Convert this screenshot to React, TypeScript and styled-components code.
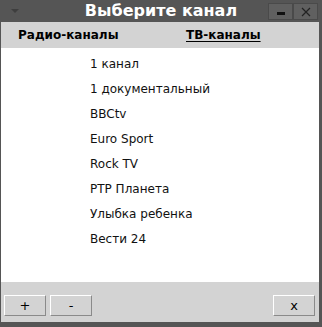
import styled, { createGlobalStyle } from "styled-components"

const GlobalStyle = createGlobalStyle`
    html, body {
        margin: 0;
        padding: 0;
        background: #555555;
    }
    body {
        font-family: "DejaVu Sans", "Liberation Sans", sans-serif;
    }
`

const channels = [
    "1 канал",
    "1 документальный",
    "BBCtv",
    "Euro Sport",
    "Rock TV",
    "РТР Планета",
    "Улыбка ребенка",
    "Вести 24",
]

export default function App() {
    return (
        <Window>
            <GlobalStyle />
            <TitleBar>
                <MenuArrow />
                <Title>Выберите канал</Title>
                <TitleButtons>
                    <TitleButton>
                        <svg width="10" height="10" viewBox="0 0 10 10">
                            <rect x="1" y="5" width="8" height="3" fill="#111" />
                        </svg>
                    </TitleButton>
                    <TitleButton>
                        <svg width="10" height="10" viewBox="0 0 10 10">
                            <path d="M1 1 L9 9 M9 1 L1 9" stroke="#222" strokeWidth="1.2" />
                        </svg>
                    </TitleButton>
                </TitleButtons>
            </TitleBar>
            <Body>
                <Tabs>
                    <Tab>Радио-каналы</Tab>
                    <Tab $active>ТВ-каналы</Tab>
                </Tabs>
                <List>
                    {channels.map((name) => (
                        <Item key={name}>{name}</Item>
                    ))}
                </List>
                <Footer>
                    <ButtonGroup>
                        <Button>+</Button>
                        <Button>-</Button>
                    </ButtonGroup>
                    <Button>x</Button>
                </Footer>
            </Body>
        </Window>
    )
}

const Window = styled.div`
    width: 322px;
    height: 327px;
    background: #555555;
    display: flex;
    flex-direction: column;
    box-sizing: border-box;
    padding: 0 3px 5px 1px;
`
const TitleBar = styled.div`
    height: 22px;
    display: flex;
    align-items: center;
    position: relative;
    margin-right: -3px;
    margin-left: -1px;
`
const MenuArrow = styled.div`
    position: absolute;
    left: 11px;
    top: 9px;
    width: 0;
    height: 0;
    border-left: 4px solid transparent;
    border-right: 4px solid transparent;
    border-top: 4px solid #3e3e3e;
`
const Title = styled.div`
    flex: 1;
    text-align: center;
    color: #ffffff;
    font-weight: bold;
    font-size: 16px;
    line-height: 22px;
`
const TitleButtons = styled.div`
    position: absolute;
    left: 268px;
    top: 3px;
    display: flex;
`
const TitleButton = styled.div`
    width: 25px;
    height: 17px;
    box-sizing: border-box;
    border: 1px solid #4a4a4a;
    background: #606060;
    display: flex;
    align-items: center;
    justify-content: center;
`
const Body = styled.div`
    flex: 1;
    background: #d3d3d3;
    display: flex;
    flex-direction: column;
`
const Tabs = styled.div`
    height: 26px;
    display: flex;
    align-items: center;
    padding-left: 17px;
`
const Tab = styled.div<{ $active?: boolean }>`
    flex: none;
    font-weight: bold;
    font-size: 12px;
    color: #000;
    width: ${(p) => (p.$active ? "auto" : "168px")};
    text-decoration: ${(p) => (p.$active ? "underline" : "none")};
    text-underline-offset: 2px;
`
const List = styled.div`
    height: 234px;
    background: #ffffff;
    display: flex;
    flex-direction: column;
    padding: 4px 0 0 89px;
    box-sizing: border-box;
`
const Item = styled.div`
    height: 25px;
    line-height: 25px;
    font-size: 12px;
    color: #111;
`
const Footer = styled.div`
    flex: 1;
    display: flex;
    justify-content: space-between;
    align-items: flex-start;
    padding: 13px 4px 0 3px;
`
const ButtonGroup = styled.div`
    display: flex;
    gap: 4px;
`
const Button = styled.div`
    width: 42px;
    height: 21px;
    box-sizing: border-box;
    border-top: 1px solid #ffffff;
    border-left: 1px solid #ffffff;
    border-right: 1px solid #8a8a8a;
    border-bottom: 1px solid #8a8a8a;
    background: #d3d3d3;
    display: flex;
    align-items: center;
    justify-content: center;
    font-size: 13px;
    color: #000;
`
